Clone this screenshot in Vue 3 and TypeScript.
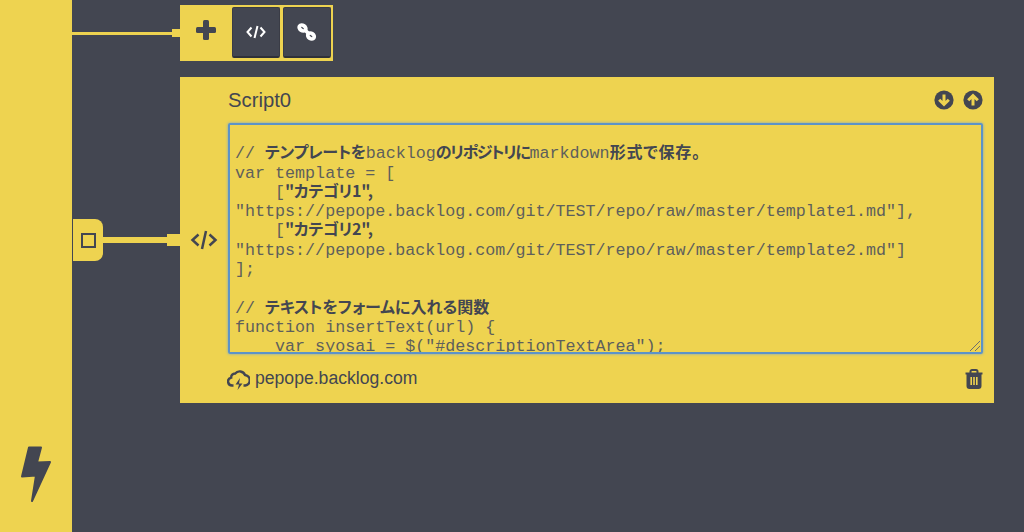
<script setup lang="ts">
interface Part { t: string; j?: string }
const lines: Part[][] = [
  [{ t: '' }],
  [{ t: '// ' }, { t: 'テンプレートを', j: 'snug' }, { t: 'backlog' }, { t: 'のリポジトリに', j: 'tight' }, { t: 'markdown' }, { t: '形式で保存。', j: 'wide' }],
  [{ t: 'var template = [' }],
  [{ t: '    [' }, { t: '"カテゴリ1",', j: 'snug' }],
  [{ t: '"https://pepope.backlog.com/git/TEST/repo/raw/master/template1.md"],' }],
  [{ t: '    [' }, { t: '"カテゴリ2",', j: 'snug' }],
  [{ t: '"https://pepope.backlog.com/git/TEST/repo/raw/master/template2.md"]' }],
  [{ t: '];' }],
  [{ t: '' }],
  [{ t: '// ' }, { t: 'テキストをフォームに入れる関数', j: 'plain' }],
  [{ t: 'function insertText(url) {' }],
  [{ t: '    var syosai = $("#descriptionTextArea");' }],
]
</script>

<template>
  <div class="page">
    <aside class="sidebar">
      <svg class="bolt" viewBox="0 0 32 58" width="32" height="58">
        <path d="M9 2.500H21L17 17.500 30 17 12 56 16 30.500 2 31.500Z" fill="#434651" stroke="#434651" stroke-width="2" stroke-linejoin="round" />
      </svg>
    </aside>
    <main class="main">
      <div class="row-top">
        <div class="wire-top"><span class="wire-line"></span><span class="wire-stub"></span></div>
        <div class="toolbar">
          <div class="plus">
            <svg viewBox="0 0 20 20" width="20" height="20" fill="#434651"><rect x="7" width="6" height="20" rx="1.500" /><rect y="7" width="20" height="6" rx="1.500" /></svg>
          </div>
          <button class="tool" type="button">
            <svg viewBox="0 0 20 14" width="20" height="14" fill="none" stroke="#fff" stroke-width="2"><path d="M5.500 2.500 1.500 7l4 4.500M14.500 2.500l4 4.500-4 4.500M11.500 1 8.500 13" /></svg>
          </button>
          <button class="tool" type="button">
            <svg class="link" viewBox="0 0 20 20" width="20" height="20" fill="none" stroke="#fff" stroke-width="3.800"><ellipse cx="5.500" cy="6" rx="3.500" ry="2.600" transform="rotate(35 5.500 6)" /><ellipse cx="14" cy="14" rx="3.500" ry="2.600" transform="rotate(35 14 14)" /><path d="m8 8 4 4" /></svg>
          </button>
        </div>
      </div>
      <div class="row-card">
        <div class="wire-card">
          <div class="handle"><span class="square"></span></div>
          <span class="wire-thick"></span>
          <span class="wire-stub2"></span>
        </div>
        <section class="card">
          <div class="gutter">
            <svg viewBox="0 0 28 20" width="28" height="20" fill="none" stroke="#434651" stroke-width="2.500"><path d="M8.500 4.500 2.500 10l6 5.500M19.500 4.500l6 5.500-6 5.500M16 1 12 19" /></svg>
          </div>
          <div class="body">
            <header class="head">
              <span class="title">Script0</span>
              <div class="arrows">
                <svg viewBox="0 0 20 20" width="20" height="20"><circle cx="10" cy="10" r="9.600" fill="#434651" /><path d="M10 4.500v10M5.200 9.700l4.800 4.800 4.800-4.800" fill="none" stroke="#eed350" stroke-width="3" /></svg>
                <svg viewBox="0 0 20 20" width="20" height="20"><circle cx="10" cy="10" r="9.600" fill="#434651" /><path d="M10 15.500v-10M5.200 10.300 10 5.500l4.800 4.800" fill="none" stroke="#eed350" stroke-width="3" /></svg>
              </div>
            </header>
            <div class="editor">
              <div class="code">
                <div v-for="(line, i) in lines" :key="i" class="line"><template v-for="(p, k) in line" :key="k"><span v-if="p.j" class="ja" :class="p.j">{{ p.t }}</span><template v-else>{{ p.t }}</template></template></div>
              </div>
              <svg class="grip" viewBox="0 0 12 12" width="12" height="12" fill="none" stroke="#6b6d70" stroke-width="1"><path d="M1 11 11 1M6 11l5-5" /></svg>
            </div>
            <footer class="foot">
              <div class="host">
                <svg viewBox="0 0 23 22" width="23" height="22" fill="none" stroke="#434651" stroke-width="2.400"><path d="M6.500 17.500H5.200a4 4 0 0 1-1-7.900 3.800 3.800 0 0 1 4-4.100A5.800 5.800 0 0 1 18 7a5.300 5.300 0 0 1 .3 10.500h-1.800" /><path d="M13 10 8.500 16.500H12L10.500 22 15.500 15.500H12z" fill="#434651" stroke="none" /></svg>
                <span>pepope.backlog.com</span>
              </div>
              <svg viewBox="0 0 18 20" width="18" height="20" fill="none" stroke="#434651"><path d="M.5 4.500h17" stroke-width="2" /><path d="M5.500 4V2.500C5.500 1.600 6.200 1 7 1h4c.8 0 1.500.6 1.500 1.500V4" stroke-width="2" /><path d="M2.500 4.500V17c0 1.200 1 2 2 2h9c1 0 2-.8 2-2V4.500" stroke-width="2" fill="#434651" /><path d="M6.200 8v8M9 8v8M11.800 8v8" stroke="#eed350" stroke-width="1.600" /></svg>
            </footer>
          </div>
        </section>
      </div>
    </main>
  </div>
</template>

<style>
html, body { margin: 0; background: #434651; }
</style>

<style scoped>
.page {
  display: flex;
  width: 1024px;
  height: 532px;
  overflow: hidden;
  background: #434651;
  color: #434651;
  font-family: "Liberation Sans", Arial, sans-serif;
}
.sidebar {
  display: flex;
  flex: 0 0 72px;
  align-items: flex-end;
  justify-content: center;
  background: #eed350;
  padding-bottom: 29px;
  box-sizing: border-box;
}
.bolt { display: block; }
.main {
  display: flex;
  flex: 1;
  flex-direction: column;
  gap: 16px;
  padding-top: 5px;
}
.row-top { display: flex; align-items: flex-start; }
.wire-top {
  display: flex;
  align-items: center;
  width: 108px;
  height: 56px;
}
.wire-line { flex: 1; height: 3px; background: #eed350; }
.wire-stub { width: 8px; height: 8px; background: #eed350; }
.toolbar {
  display: flex;
  gap: 3px;
  width: 153px;
  height: 56px;
  box-sizing: border-box;
  padding: 2px 2px 3px 0;
  background: #eed350;
}
.plus {
  display: flex;
  flex: 0 0 49px;
  align-items: center;
  justify-content: center;
  padding: 0 0 5px 3px;
  box-sizing: border-box;
}
.tool {
  display: flex;
  flex: 0 0 48px;
  align-items: center;
  justify-content: center;
  box-sizing: border-box;
  margin: 0;
  padding: 0;
  height: 51px;
  border: 1px solid #3a3c46;
  border-bottom: 2px solid #2f3139;
  border-radius: 2px;
  background: #434651;
}
.link { margin-left: -1px; }
.row-card { display: flex; align-items: center; }
.wire-card {
  display: flex;
  align-items: center;
  width: 108px;
  padding-left: 1px;
  box-sizing: border-box;
}
.handle {
  display: flex;
  flex: 0 0 30px;
  align-items: center;
  justify-content: center;
  height: 42px;
  background: #eed350;
  border-radius: 0 8px 8px 0;
}
.square {
  width: 11px;
  height: 11px;
  border: 2px solid #434651;
}
.wire-thick { flex: 1; height: 6px; background: #eed350; }
.wire-stub2 { flex: 0 0 13px; height: 12px; background: #eed350; }
.card {
  display: flex;
  width: 814px;
  height: 326px;
  background: #eed350;
}
.gutter {
  display: flex;
  flex: 0 0 48px;
  align-items: center;
  justify-content: center;
}
.body {
  display: flex;
  flex: 0 0 755px;
  flex-direction: column;
}
.head {
  display: flex;
  align-items: center;
  justify-content: space-between;
  height: 46px;
}
.title { font-size: 20.300px; }
.arrows {
  display: flex;
  gap: 9px;
  margin-top: -1px;
}
.arrows svg { display: block; }
.editor {
  position: relative;
  height: 231px;
  box-sizing: border-box;
  border: 2px solid #5c93c8;
  border-radius: 2px;
  box-shadow: 0 0 3px #6fa3d6;
  overflow: hidden;
  padding-left: 5px;
}
.code {
  font-family: "Liberation Mono", "Courier New", monospace;
  font-size: 16.700px;
  white-space: pre;
  color: #5e5f5c;
}
.line { height: 19.300px; line-height: 19.300px; }
.ja {
  display: inline-block;
  height: 12px;
  line-height: 12px;
  vertical-align: baseline;
  font-family: "Noto Sans CJK JP", "Liberation Sans", sans-serif;
  font-size: 16px;
  font-weight: 700;
  font-feature-settings: "palt";
  color: #434651;
}
.snug { letter-spacing: -0.300px; }
.tight { letter-spacing: -1.400px; }
.wide { letter-spacing: 0.800px; }
.grip { position: absolute; right: 0; bottom: 0; }
.foot {
  display: flex;
  flex: 1;
  align-items: center;
  justify-content: space-between;
}
.host {
  display: flex;
  align-items: center;
  gap: 5px;
  margin-left: -1px;
  font-size: 17.600px;
}
.foot svg { display: block; }
</style>
